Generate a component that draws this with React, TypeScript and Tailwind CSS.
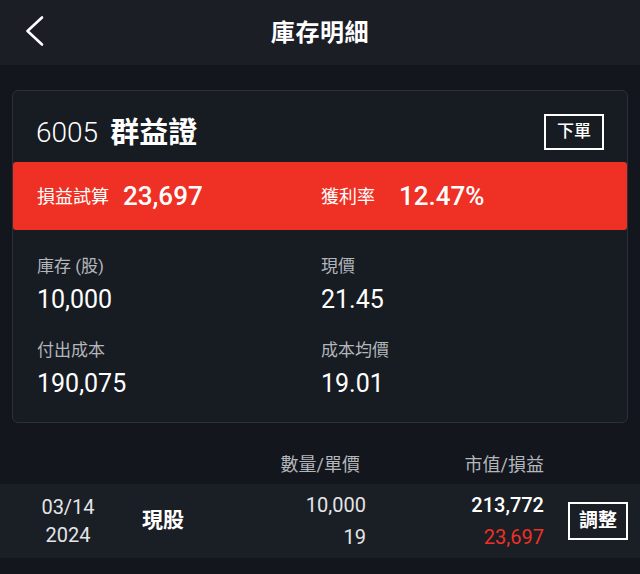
const font = { fontFamily: 'Roboto, "Noto Sans CJK TC", sans-serif' };

const stats = [
  { label: '庫存 (股)', value: '10,000' },
  { label: '現價', value: '21.45' },
  { label: '付出成本', value: '190,075' },
  { label: '成本均價', value: '19.01' },
];

export default function App() {
  return (
    <div className="w-[640px] h-[574px] bg-[#13161d] text-white overflow-hidden" style={font}>
      {/* header */}
      <div className="relative h-[65px] bg-[#1c1e26] flex items-center justify-center">
        <svg className="absolute left-[24px] top-[15px]" width="22" height="32" viewBox="0 0 22 32" fill="none">
          <polyline points="18,2.5 3.5,16 18,29.5" stroke="white" strokeWidth="2.6" strokeLinecap="round" strokeLinejoin="round" />
        </svg>
        <h1 className="text-[24px] font-semibold tracking-wide">庫存明細</h1>
      </div>

      {/* summary card */}
      <div className="mx-[12px] mt-[25px] rounded-[6px] border border-[#2c3038] bg-[#171b22] overflow-hidden">
        <div className="flex items-center justify-between px-[23px] pt-[23px] pb-[12px]">
          <div className="self-end flex items-center gap-[12px] leading-[34px]">
            <span className="text-[28px] font-light">6005</span>
            <span className="text-[29px] font-bold">群益證</span>
          </div>
          <button className="w-[60px] h-[36px] border-2 border-white text-[17px] font-medium flex items-center justify-center">
            下單
          </button>
        </div>

        <div className="h-[68px] bg-[#ee3124] rounded-[3px] grid grid-cols-[284px_1fr] items-center pl-[24px]">
          <div className="flex items-center gap-[14px]">
            <span className="text-[18px]">損益試算</span>
            <span className="text-[26px] font-medium">23,697</span>
          </div>
          <div className="flex items-center gap-[24px]">
            <span className="text-[18px]">獲利率</span>
            <span className="text-[26px] font-medium">12.47%</span>
          </div>
        </div>

        <div className="grid grid-cols-[284px_1fr] gap-y-[22px] pl-[24px] pt-[24px] pb-[22px]">
          {stats.map((s) => (
            <div key={s.label} className="flex flex-col gap-[6px]">
              <span className="text-[17px] leading-[24px] text-[#b3b6bb]">{s.label}</span>
              <span className="text-[25px] leading-[32px]">{s.value}</span>
            </div>
          ))}
        </div>
      </div>

      {/* table header */}
      <div className="flex mt-[28px] h-[26px] items-center text-[18px] text-[#b3b6bb]">
        <div className="w-[230px]" />
        <div className="w-[130px] text-right">數量/單價</div>
        <div className="w-[184px] text-right">市值/損益</div>
      </div>

      {/* row */}
      <div className="flex items-center mt-[7px] h-[74px] bg-[#1a1e25]">
        <div className="w-[136px] text-center text-[20px] leading-[28px] text-[#e4e5e7]">
          <div>03/14</div>
          <div>2024</div>
        </div>
        <div className="w-[94px] pl-[6px] text-[21px] font-bold">現股</div>
        <div className="w-[136px] text-right text-[20px] leading-[32px] text-[#e4e5e7]">
          <div>10,000</div>
          <div>19</div>
        </div>
        <div className="w-[178px] text-right text-[20px] leading-[32px]">
          <div className="font-medium">213,772</div>
          <div className="text-[#ee3124]">23,697</div>
        </div>
        <button className="ml-[24px] w-[60px] h-[38px] border-2 border-white text-[19px] font-bold flex items-center justify-center">
          調整
        </button>
      </div>
    </div>
  );
}
